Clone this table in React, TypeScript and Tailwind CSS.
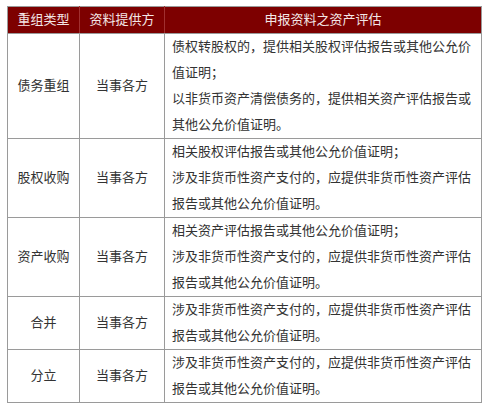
const rows = [
  {
    type: '债务重组',
    party: '当事各方',
    lines: [
      '债权转股权的，提供相关股权评估报告或其他公允价值证明；',
      '以非货币资产清偿债务的，提供相关资产评估报告或其他公允价值证明。',
    ],
  },
  {
    type: '股权收购',
    party: '当事各方',
    lines: [
      '相关股权评估报告或其他公允价值证明；',
      '涉及非货币性资产支付的，应提供非货币性资产评估报告或其他公允价值证明。',
    ],
  },
  {
    type: '资产收购',
    party: '当事各方',
    lines: [
      '相关资产评估报告或其他公允价值证明；',
      '涉及非货币性资产支付的，应提供非货币性资产评估报告或其他公允价值证明。',
    ],
  },
  {
    type: '合并',
    party: '当事各方',
    lines: ['涉及非货币性资产支付的，应提供非货币性资产评估报告或其他公允价值证明。'],
  },
  {
    type: '分立',
    party: '当事各方',
    lines: ['涉及非货币性资产支付的，应提供非货币性资产评估报告或其他公允价值证明。'],
  },
];

export default function App() {
  return (
    <div
      className="w-[490px] h-[405px] bg-white pt-[6px] pl-[7px]"
      style={{ fontFamily: '"Liberation Serif", "Noto Sans CJK SC", serif' }}
    >
      <table className="w-[475px] border-collapse table-fixed text-[13px] text-[#333]">
        <colgroup>
          <col className="w-[72px]" />
          <col className="w-[85px]" />
          <col />
        </colgroup>
        <thead>
          <tr className="h-[27px] bg-[#7d0000] text-[#f3e6e6]">
            <th className="border border-[#9a9a9a] border-r-[#a03030] font-normal text-center">重组类型</th>
            <th className="border border-[#9a9a9a] border-r-[#a03030] font-normal text-center">资料提供方</th>
            <th className="border border-[#9a9a9a] font-normal text-center">申报资料之资产评估</th>
          </tr>
        </thead>
        <tbody>
          {rows.map((r) => (
            <tr key={r.type}>
              <td className="border border-[#9a9a9a] text-center align-middle">{r.type}</td>
              <td className="border border-[#9a9a9a] text-center align-middle">{r.party}</td>
              <td className="border border-[#9a9a9a] pl-[7px] pr-[3px] leading-[26px]">
                {r.lines.map((l) => (
                  <p key={l}>{l}</p>
                ))}
              </td>
            </tr>
          ))}
        </tbody>
      </table>
    </div>
  );
}
